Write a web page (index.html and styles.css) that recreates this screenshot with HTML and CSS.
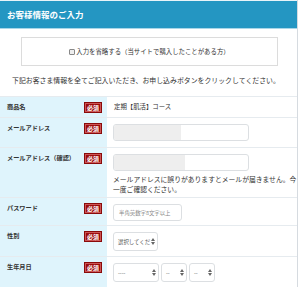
FILE: index.html
```html
<!DOCTYPE html>
<html lang="ja">
<head>
  <meta charset="UTF-8">
  <title>お客様情報のご入力</title>
  <link rel="stylesheet" href="styles.css">
</head>
<body>

<!-- === Customer Info Form === -->
<section class="form-box">
  <h2 class="form-title">お客様情報のご入力</h2>

  <div class="skip-box">
    <label><span class="check"></span>入力を省略する（当サイトで購入したことがある方）</label>
  </div>

  <p class="lead">下記お客さま情報を全てご記入いただき、お申し込みボタンをクリックしてください。</p>

  <div class="form-table">
    <div class="row">
      <div class="label"><span>商品名</span><em class="req">必須</em></div>
      <div class="value product-name">定期【肌活】コース</div>
    </div>
    <div class="row">
      <div class="label"><span>メールアドレス</span><em class="req">必須</em></div>
      <div class="value">
        <div class="input wide"><i class="filled" style="width: 50%"></i></div>
      </div>
    </div>
    <div class="row">
      <div class="label"><span>メールアドレス（確認）</span><em class="req">必須</em></div>
      <div class="value">
        <div class="input wide"><i class="filled" style="width: 53%"></i></div>
        <p class="note">メールアドレスに誤りがありますとメールが届きません。今一度ご確認ください。</p>
      </div>
    </div>
    <div class="row">
      <div class="label"><span>パスワード</span><em class="req">必須</em></div>
      <div class="value">
        <div class="input short placeholder">半角英数字8文字以上</div>
      </div>
    </div>
    <div class="row">
      <div class="label"><span>性別</span><em class="req">必須</em></div>
      <div class="value">
        <div class="select sel-gender">選択してくだ<b class="arrows"></b></div>
      </div>
    </div>
    <div class="row">
      <div class="label"><span>生年月日</span><em class="req">必須</em></div>
      <div class="value selects">
        <div class="select sel-year">----<b class="arrows"></b></div>
        <div class="select sel-small">--<b class="arrows"></b></div>
        <div class="select sel-small">--<b class="arrows"></b></div>
      </div>
    </div>
  </div>
</section>

</body>
</html>
```

FILE: styles.css
```css
/* ===== Global Styles ===== */
* {
  margin: 0;
  padding: 0;
  box-sizing: border-box;
}
body {
  font-family: "Noto Sans CJK JP", "Noto Sans", sans-serif;
  background: #fff;
  color: #333;
  font-size: 7px;
  width: 300px;
  height: 287px;
  overflow: hidden;
}
.form-box {
  width: 298px;
  border-right: 1px solid #d6dbe0;
  min-height: 287px;
}

/* ===== Title ===== */
.form-title {
  background: #2496c2;
  color: #fff;
  font-size: 8.5px;
  font-weight: bold;
  line-height: 27px;
  height: 29px;
  padding: 0 0 0 7px;
  border-top: 1px solid #e8f3f8;
  border-bottom: 1px solid #a9d6e8;
}

/* ===== Skip Box ===== */
.skip-box {
  margin: 8px 19px 0 21px;
  height: 29px;
  border: 1px solid #dcdcdc;
  display: flex;
  align-items: center;
  justify-content: center;
  font-size: 6.4px;
  color: #333;
}
.skip-box label {
  display: flex;
  align-items: center;
  white-space: nowrap;
}
.check {
  width: 6px;
  height: 6px;
  border: 1px solid #888;
  border-radius: 1px;
  background: #eee;
  margin-right: 1px;
}
.lead {
  font-size: 6.9px;
  padding: 9px 0 0 12px;
  height: 30px;
  white-space: nowrap;
}

/* ===== Form Table ===== */
.form-table {
  border-top: 1px solid #e6ebef;
}
.row {
  display: flex;
  border-bottom: 1px solid #e6ebef;
}
.label {
  width: 107px;
  flex-shrink: 0;
  background: #dff4fc;
  display: flex;
  justify-content: space-between;
  align-items: flex-start;
  padding: 5px 6px 0 7px;
  font-weight: bold;
  font-size: 6.2px;
  white-space: nowrap;
}
.label span {
  line-height: 10px;
}
.req {
  flex-shrink: 0;
  font-style: normal;
  background: #9b0c0c;
  color: #fff;
  font-size: 6px;
  font-weight: bold;
  line-height: 7px;
  padding: 0 1px;
  border: 1px solid #c55;
  outline: 1px solid #8a0a0a;
  margin-top: 1px;
}
.value {
  flex: 1;
  padding: 6px 0 6px 6px;
  font-size: 6.4px;
}
.product-name {
  padding: 5px 0 4px 7px;
  line-height: 10px;
}
.row:nth-child(1) { height: 21px; }
.row:nth-child(2) { height: 30px; }
.row:nth-child(3) { height: 50px; }
.row:nth-child(4) { height: 28px; }
.row:nth-child(5) { height: 31px; }
.row:nth-child(6) { height: 32px; }

/* ===== Inputs ===== */
.input {
  height: 17px;
  border: 1px solid #dcdfe2;
  border-radius: 3px;
  background: #fff;
  display: flex;
  align-items: center;
  overflow: hidden;
}
.input.wide {
  width: 136px;
}
.filled {
  display: block;
  height: 100%;
  background: #eeeeee;
}
.input.short {
  width: 69px;
  padding-left: 5px;
  font-size: 5.4px;
  color: #888;
  white-space: nowrap;
}
.note {
  font-size: 6.8px;
  line-height: 10px;
  margin-top: 3px;
}
.select {
  height: 19px;
  border: 1px solid #dcdfe2;
  border-radius: 3px;
  display: flex;
  align-items: center;
  justify-content: space-between;
  padding: 0 2px 0 4px;
  font-size: 5.4px;
  color: #555;
  white-space: nowrap;
  overflow: hidden;
}
.sel-gender { width: 45px; }
.sel-year { width: 46px; }
.sel-small { width: 26px; }
.selects {
  display: flex;
  gap: 2px;
}
.arrows {
  flex-shrink: 0;
  width: 4px;
  height: 7px;
  position: relative;
}
.arrows::before,
.arrows::after {
  content: "";
  position: absolute;
  left: 0;
  border-left: 2px solid transparent;
  border-right: 2px solid transparent;
}
.arrows::before {
  top: 0;
  border-bottom: 3px solid #666;
}
.arrows::after {
  bottom: 0;
  border-top: 3px solid #666;
}
```
